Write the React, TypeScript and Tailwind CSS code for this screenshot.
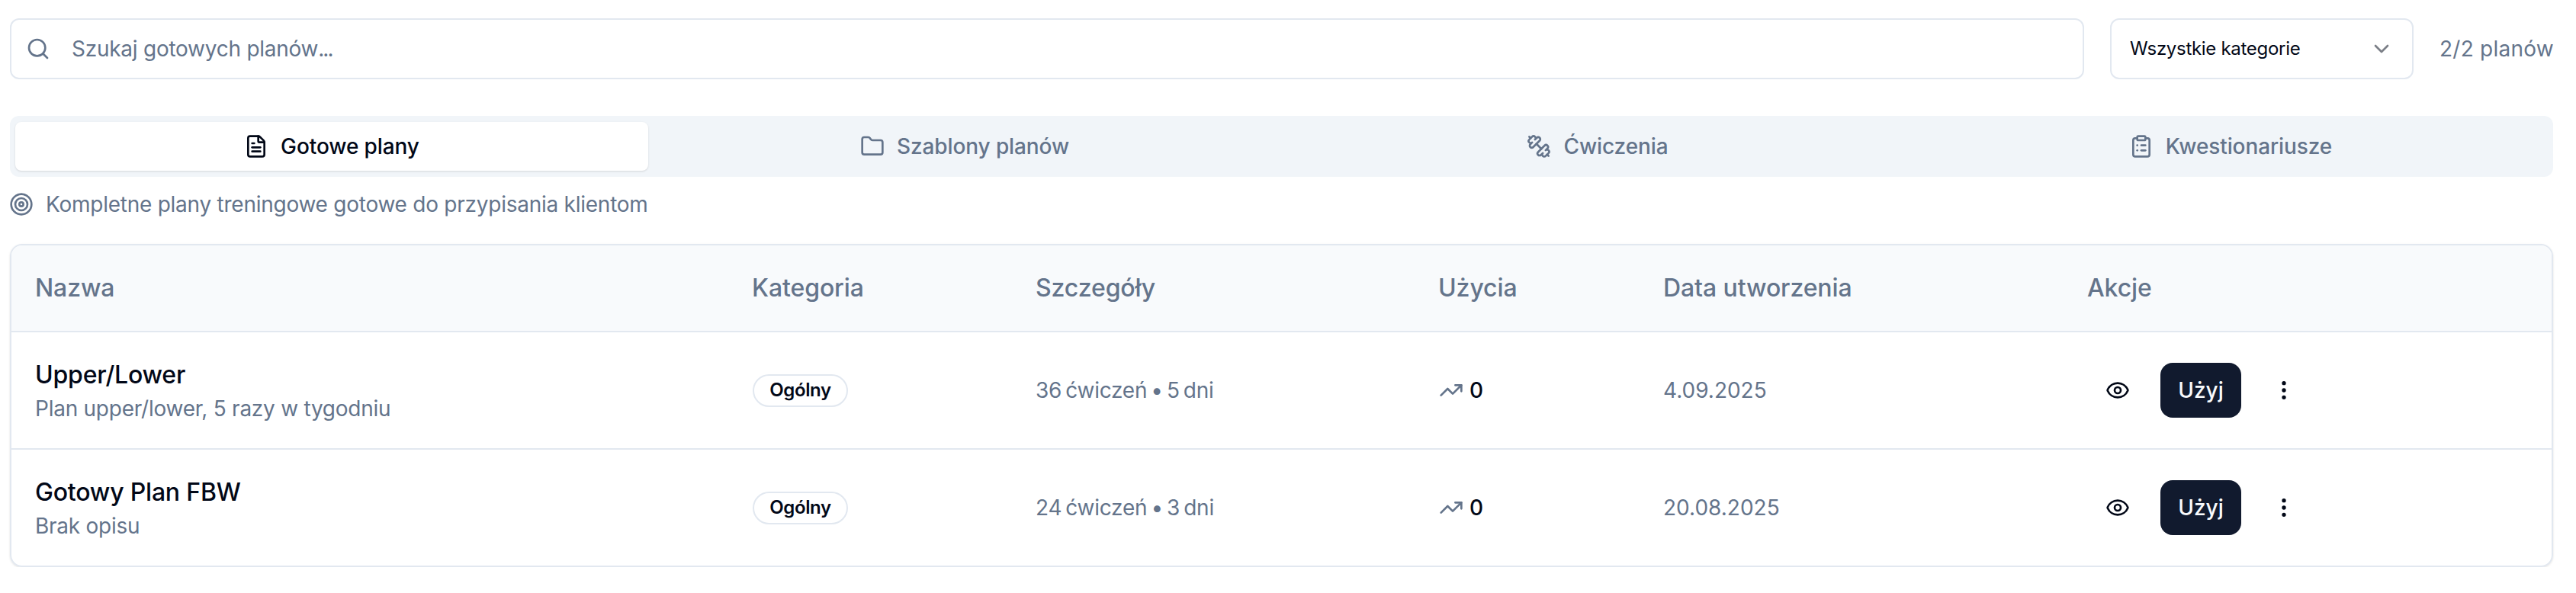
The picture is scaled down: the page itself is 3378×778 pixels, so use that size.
import { ChevronDown, ClipboardList, Dumbbell, EllipsisVertical, Eye, FileText, Folder, Search, Target, TrendingUp } from 'lucide-react';

const tabs = [
  { label: 'Gotowe plany', icon: FileText, active: true },
  { label: 'Szablony planów', icon: Folder },
  { label: 'Ćwiczenia', icon: Dumbbell, flip: true },
  { label: 'Kwestionariusze', icon: ClipboardList },
];

const plans = [
  { name: 'Upper/Lower', desc: 'Plan upper/lower, 5 razy w tygodniu', details: '36 ćwiczeń • 5 dni', date: '4.09.2025' },
  { name: 'Gotowy Plan FBW', desc: 'Brak opisu', details: '24 ćwiczeń • 3 dni', date: '20.08.2025' },
];

const headers = ['Nazwa', 'Kategoria', 'Szczegóły', 'Użycia', 'Data utworzenia', 'Akcje'];

export default function App() {
  return (
    <div className="bg-white pl-[13px] pr-[30px] pt-[24px] font-['Inter',sans-serif] text-[28px] leading-[40px] text-[#020817]">
      <div className="flex items-center">
        <div className="flex h-[80px] flex-1 items-center rounded-[12px] border-2 border-[#e2e8f0] pl-[19px]">
          <Search className="size-[32px] text-[#64748b]" strokeWidth={2} />
          <span className="ml-[28px] tracking-[-0.25px] text-[#64748b]">
            Szukaj gotowych planów<span className="tracking-[-2px]">...</span>
          </span>
        </div>
        <div className="ml-[34px] flex h-[80px] w-[398px] items-center justify-between rounded-[12px] border-2 border-[#e2e8f0] pl-[24px] pr-[24px]">
          <span className="text-[24px] tracking-[-0.3px]">Wszystkie kategorie</span>
          <ChevronDown className="size-[32px] text-[#7b7f87]" strokeWidth={2} />
        </div>
        <span className="ml-[34px] w-[149px] whitespace-nowrap tracking-[0.25px] text-[#64748b]">2/2 planów</span>
      </div>

      <div className="mt-[48px] grid h-[80px] grid-cols-4 rounded-[12px] bg-[#f1f5f9] py-[8px] pl-[7px] pr-[8px]">
        {tabs.map((t) => (
          <div
            key={t.label}
            className={
              t.active
                ? 'flex items-center justify-center gap-[16px] rounded-[8px] bg-white font-medium tracking-[-0.1px] shadow-sm'
                : 'flex items-center justify-center gap-[16px] font-medium tracking-[-0.1px] text-[#64748b]'
            }
          >
            <t.icon className={t.flip ? 'size-[32px] -scale-x-100' : 'size-[32px]'} strokeWidth={2} />
            {t.label}
          </div>
        ))}
      </div>

      <div className="mt-[16px] flex items-center gap-[16px] tracking-[-0.25px] text-[#64748b]">
        <Target className="-ml-[1px] size-[32px]" strokeWidth={2} />
        Kompletne plany treningowe gotowe do przypisania klientom
      </div>

      <div className="mt-[32px] overflow-hidden rounded-[16px] border-2 border-[#e2e8f0] shadow-sm">
        <table className="w-full table-fixed border-separate border-spacing-0">
          <colgroup>
            <col className="w-[940px]" />
            <col className="w-[372px]" />
            <col className="w-[528px]" />
            <col className="w-[295px]" />
            <col className="w-[556px]" />
            <col />
          </colgroup>
          <thead>
            <tr>
              {headers.map((h) => (
                <th key={h} className="h-[114px] border-b-2 border-[#e2e8f0] bg-[#f8fafc] pl-[31px] pr-[32px] text-left text-[32px] font-medium tracking-[-0.1px] text-[#64748b]">
                  {h}
                </th>
              ))}
            </tr>
          </thead>
          <tbody>
            {plans.map((p, i) => {
              const cell = i === 0 ? 'h-[154px] border-b-2 border-[#e2e8f0] pl-[31px] pr-[32px]' : 'h-[152px] pl-[31px] pr-[32px]';
              return (
                <tr key={p.name}>
                  <td className={cell}>
                    <div className="text-[32px] font-medium leading-[48px] tracking-[-0.2px]">{p.name}</div>
                    <div className="tracking-[-0.25px] text-[#64748b]">{p.desc}</div>
                  </td>
                  <td className={cell}>
                    <span className="ml-[1px] inline-flex h-[43px] w-[125px] items-center justify-center rounded-full border-2 border-[#e2e8f0] text-[24px] font-semibold leading-[32px] tracking-[-0.4px]">
                      Ogólny
                    </span>
                  </td>
                  <td className={cell}>
                    <span className="tracking-[-0.25px] text-[#64748b] [word-spacing:-2.5px]">{p.details}</span>
                  </td>
                  <td className={cell}>
                    <div className="ml-[1px] flex items-center gap-[8px] font-medium">
                      <TrendingUp className="size-[32px] text-[#64748b]" strokeWidth={2} />
                      0
                    </div>
                  </td>
                  <td className={cell}>
                    <span className="text-[#64748b]">{p.date}</span>
                  </td>
                  <td className={cell}>
                    <div className="flex items-center gap-[16px]">
                      <div className="flex size-[80px] items-center justify-center">
                        <Eye className="size-[32px]" strokeWidth={2} />
                      </div>
                      <div className="flex h-[72px] w-[106px] items-center justify-center rounded-[16px] bg-[#111a2e] font-medium text-[#f8fafc]">
                        Użyj
                      </div>
                      <div className="flex size-[80px] items-center justify-center">
                        <EllipsisVertical className="size-[32px]" strokeWidth={2} />
                      </div>
                    </div>
                  </td>
                </tr>
              );
            })}
          </tbody>
        </table>
      </div>
    </div>
  );
}
